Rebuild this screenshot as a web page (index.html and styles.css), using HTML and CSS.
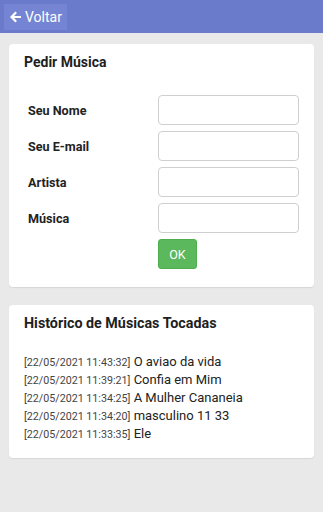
FILE: index.html
```html
<!DOCTYPE html>
<html lang="pt">
<head>
<meta charset="utf-8">
<link rel="stylesheet" href="styles.css">
</head>
<body>
<header class="topbar">
  <a class="back-btn" href="#">
    <svg class="back-icon" viewBox="0 0 14 14" width="12" height="12"><path d="M7.2 1.5 L1.8 7 L7.2 12.5 M2.2 7 H12.8" fill="none" stroke="#fff" stroke-width="2.6" stroke-linejoin="miter" stroke-linecap="butt"/></svg>
    <span>Voltar</span>
  </a>
</header>
<main class="content">
  <section class="card form-card">
    <h2 class="card-title">Pedir Música</h2>
    <form class="req-form">
      <div class="row"><label>Seu Nome</label><input type="text"></div>
      <div class="row"><label>Seu E-mail</label><input type="text"></div>
      <div class="row"><label>Artista</label><input type="text"></div>
      <div class="row"><label>Música</label><input type="text"></div>
      <div class="row"><span></span><button type="button" class="ok-btn">OK</button></div>
    </form>
  </section>
  <section class="card hist-card">
    <h2 class="card-title">Histórico de Músicas Tocadas</h2>
    <ul class="hist">
      <li><span class="ts">[22/05/2021 11:43:32]</span> O aviao da vida</li>
      <li><span class="ts">[22/05/2021 11:39:21]</span> Confia em Mim</li>
      <li><span class="ts">[22/05/2021 11:34:25]</span> A Mulher Cananeia</li>
      <li><span class="ts">[22/05/2021 11:34:20]</span> masculino 11 33</li>
      <li><span class="ts">[22/05/2021 11:33:35]</span> Ele</li>
    </ul>
  </section>
</main>
</body>
</html>
```
FILE: styles.css
```css
* { box-sizing: border-box; }
html, body { margin: 0; padding: 0; }
body {
  background: #e9e9e9;
  font-family: Roboto, "Noto Sans", sans-serif;
  color: #222;
  min-height: 512px;
}
.topbar {
  height: 33px;
  background: #6a7bcb;
  padding: 4px 4px;
  display: flex;
  align-items: stretch;
}
.back-btn {
  display: flex;
  align-items: center;
  gap: 3px;
  padding: 0 4px 0 6px;
  width: 63px;
  height: 26px;
  background: #7585d3;
  color: #fff;
  text-decoration: none;
  font-size: 14px;
}
.back-icon { display: block; }
.content {
  padding: 11px 9px 0 9px;
  display: flex;
  flex-direction: column;
  gap: 18px;
}
.card {
  background: #fff;
  border-radius: 4px;
  box-shadow: 0 1px 1px rgba(0,0,0,0.08);
  padding: 10px 15px 18px 15px;
}
.card-title {
  margin: 0;
  font-size: 14px;
  font-weight: 700;
  color: #1e1e1e;
  line-height: 17px;
}
.hist-card .card-title { font-size: 14.3px; }
.req-form {
  margin-top: 24px;
  display: flex;
  flex-direction: column;
  gap: 6px;
}
.row {
  display: grid;
  grid-template-columns: 134px 141px;
  align-items: center;
}
.row label {
  padding-left: 4px;
  font-size: 12.6px;
  font-weight: 700;
  color: #222;
}
.row input {
  height: 30px;
  width: 141px;
  border: 1px solid #cfcfcf;
  border-radius: 4px;
  background: #fff;
  margin: 0;
}
.ok-btn {
  width: 39px;
  height: 30px;
  margin-top: 0;
  background: #5cb85c;
  border: 1px solid #4cae4c;
  border-radius: 3px;
  color: #fff;
  font-family: Roboto, sans-serif;
  font-size: 12.5px;
  padding: 0;
}
.hist-card { padding-bottom: 15px; }
.hist {
  list-style: none;
  margin: 21px 0 0 0;
  padding: 0;
}
.hist li {
  height: 18px;
  font-size: 13px;
  line-height: 18px;
  color: #222;
  white-space: nowrap;
}
.hist .ts {
  font-size: 10.7px;
  line-height: 18px;
  color: #444;
}
```
